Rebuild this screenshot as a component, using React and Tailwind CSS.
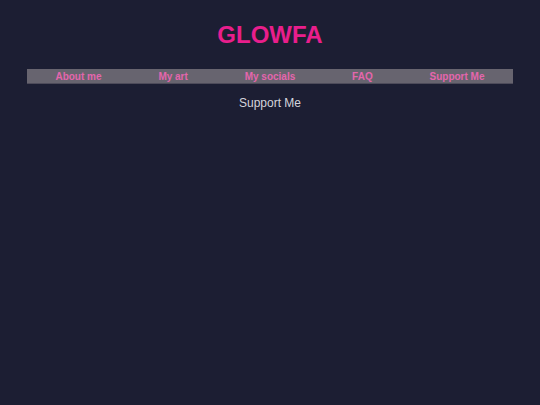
export default function App() {
  const items = ["About me", "My art", "My socials", "FAQ", "Support Me"];
  return (
    <div className="min-h-[405px] w-full bg-[#1c1e33] pt-[20px] font-['Liberation_Sans',Arial,sans-serif]">
      <h1 className="text-center text-[24px] font-bold leading-[30px] text-[#e91e8c]">GLOWFA</h1>
      <nav className="mx-[27px] mt-[19px] flex h-[15px] items-center justify-around border-b border-[#4d4b5a] bg-[#67646f] pt-[1px]">
        {items.map((t) => (
          <span key={t} className="text-[10px] font-bold leading-[13px] text-[#e466ad]">{t}</span>
        ))}
      </nav>
      <p className="mt-[11px] text-center text-[12px] leading-[16px] text-[#d4d4dc]">Support Me</p>
    </div>
  );
}
